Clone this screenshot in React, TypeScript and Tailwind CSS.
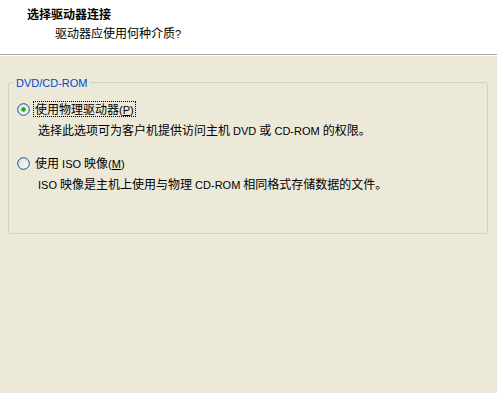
import React from 'react';

const font = { fontFamily: '"Noto Sans CJK SC", "DejaVu Sans", sans-serif' };

// latin runs are drawn a little smaller, like Tahoma 8pt next to SimSun 9pt
const L = ({ children }: { children: React.ReactNode }) => (
    <span className="text-[11px] leading-none font-['Liberation_Sans',Arial,sans-serif]">{children}</span>
);

const Radio = ({ checked }: { checked?: boolean }) => (
    <svg width="13" height="13" viewBox="0 0 13 13" className="shrink-0">
        <defs>
            <linearGradient id={checked ? 'rg1' : 'rg2'} x1="0" y1="0" x2="1" y2="1">
                <stop offset="0" stopColor="#dcdcd7" />
                <stop offset="1" stopColor="#ffffff" />
            </linearGradient>
        </defs>
        <circle cx="6.5" cy="6.5" r="5.8" fill={`url(#${checked ? 'rg1' : 'rg2'})`} stroke="#1c5180" strokeWidth="1" />
        {checked && <circle cx="6.5" cy="6.5" r="2.2" fill="#21a121" />}
    </svg>
);

export default function App() {
    return (
        <div className="w-[497px] h-[393px] flex flex-col bg-[#ece9d8] text-[12px] text-black" style={font}>
            {/* header */}
            <div className="h-[54px] bg-white pt-[6px]">
                <div className="pl-[27px] leading-[16px] font-bold">选择驱动器连接</div>
                <div className="pl-[55px] mt-[3px] leading-[16px]">驱动器应使用何种介质<L>?</L></div>
            </div>
            <div className="h-px bg-[#aca899]" />
            <div className="h-px bg-white" />

            <div className="pt-[26px] px-[8px]">
                <div className="relative w-[480px] h-[152px] border border-[#d0d0bf] rounded-[3px] pt-[18px] pl-[8px]">
                    <span className="absolute left-[5px] -top-[9px] px-[2px] bg-[#ece9d8] leading-[16px] text-[#0046d5]">
                        <L>DVD/CD-ROM</L>
                    </span>

                    <div className="flex items-center h-[16px]">
                        <Radio checked />
                        <span className="ml-[3px] px-px leading-[14px] border border-dotted border-black">
                            使用物理驱动器<L>(<u>P</u>)</L>
                        </span>
                    </div>
                    <div className="mt-[5px] pl-[21px] h-[16px] leading-[16px]">
                        选择此选项可为客户机提供访问主机<L> DVD </L>或<L> CD-ROM </L>的权限。
                    </div>

                    <div className="flex items-center h-[16px] mt-[17px]">
                        <Radio />
                        <span className="ml-[3px] px-px leading-[14px] border border-transparent">
                            使用<L> ISO </L>映像<L>(<u>M</u>)</L>
                        </span>
                    </div>
                    <div className="mt-[5px] pl-[21px] h-[16px] leading-[16px]">
                        <L>ISO </L>映像是主机上使用与物理<L> CD-ROM </L>相同格式存储数据的文件。
                    </div>
                </div>
            </div>
        </div>
    );
}
